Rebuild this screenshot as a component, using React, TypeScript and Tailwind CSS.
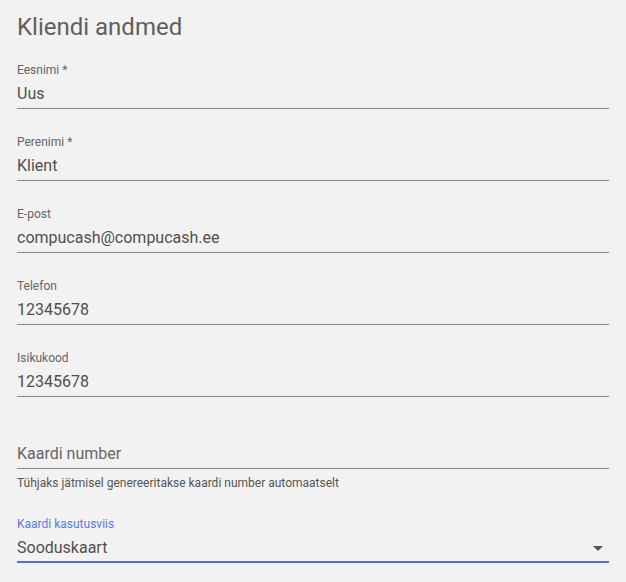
import React from 'react';

type FieldProps = {
  label?: string;
  value: string;
  placeholder?: boolean;
  helper?: string;
};

const TextField: React.FC<FieldProps> = ({ label, value, placeholder, helper }) => (
  <div className="pt-[25px]">
    <div className="h-4 text-[12px] leading-4 text-[#666]">{label}</div>
    <div className="mt-1 border-b border-[#8a8a8a] pb-[2px]">
      <div className={`h-6 text-[16px] leading-6 ${placeholder ? 'text-[#666]' : 'text-[#505050]'}`}>{value}</div>
    </div>
    {helper && <div className="mt-[6px] h-4 text-[12px] leading-4 text-[#555]">{helper}</div>}
  </div>
);

export default function App() {
  const fields: FieldProps[] = [
    { label: 'Eesnimi *', value: 'Uus' },
    { label: 'Perenimi *', value: 'Klient' },
    { label: 'E-post', value: 'compucash@compucash.ee' },
    { label: 'Telefon', value: '12345678' },
    { label: 'Isikukood', value: '12345678' },
    { value: 'Kaardi number', placeholder: true, helper: 'Tühjaks jätmisel genereeritakse kaardi number automaatselt' },
  ];

  return (
    <div className="min-h-[582px] w-full bg-[#f2f2f2] font-['Roboto',sans-serif]">
      <div className="pl-[17px] pr-[17px] pt-[12px]">
        {/* Header */}
        <h1 className="h-[25px] text-[24px] leading-[30px] text-[#5f5f5f]">Kliendi andmed</h1>

        {fields.map((f, i) => (
          <TextField key={i} {...f} />
        ))}

        {/* Select */}
        <div className="pt-[25px]">
          <div className="h-4 text-[12px] leading-4 text-[#5b7be0]">Kaardi kasutusviis</div>
          <div className="mt-1 flex items-center justify-between border-b-2 border-[#4e73d6] pb-[1px]">
            <div className="h-6 text-[16px] leading-6 text-[#505050]">Sooduskaart</div>
            <svg width="10" height="5" viewBox="0 0 10 5" className="mr-[6px]">
              <path d="M0 0 L10 0 L5 5 Z" fill="#555" />
            </svg>
          </div>
        </div>
      </div>
    </div>
  );
}
